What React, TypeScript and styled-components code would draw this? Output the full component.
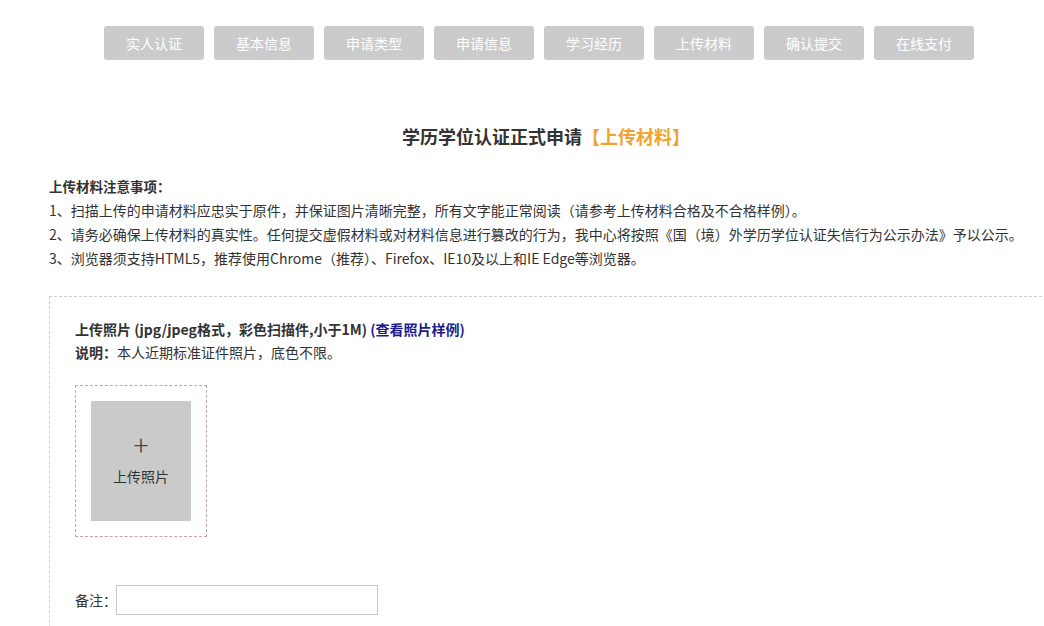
import styled, { createGlobalStyle } from "styled-components";

const GlobalStyle = createGlobalStyle`
  html, body {
    margin: 0;
    padding: 0;
    background: #fff;
    overflow: hidden;
  }
  body {
    font-family: "Noto Sans CJK SC", "Noto Sans", sans-serif;
    color: #333;
  }
`;

const steps = [
  "实人认证",
  "基本信息",
  "申请类型",
  "申请信息",
  "学习经历",
  "上传材料",
  "确认提交",
  "在线支付",
];

// styles
const Page = styled.div`
  width: 1092px;
  padding-top: 26px;
`;

const StepBar = styled.div`
  display: flex;
  gap: 10px;
  padding-left: 104px;
`;

const Step = styled.div`
  width: 100px;
  height: 34px;
  display: flex;
  align-items: center;
  justify-content: center;
  border-radius: 3px;
  background: #cbcbcb;
  color: #fff;
  font-size: 14px;
`;

const Title = styled.h1`
  margin: 63px 0 0;
  text-align: center;
  font-size: 18px;
  line-height: 26px;
  font-weight: bold;
  color: #333;

  span {
    color: #f0a32f;
  }
`;

const Notice = styled.div`
  margin-top: 25px;
  padding-left: 49px;
  font-size: 14px;
  line-height: 24px;
  color: #333;

  div {
    height: 24px;
  }
`;

const NoticeTitle = styled.div`
  font-weight: bold;
  font-size: 13.5px;
`;

const UploadBox = styled.div`
  margin: 26px 0 0 49px;
  height: 400px;
  border: 1px dashed #cfcfcf;
  border-right: none;
  padding: 20px 0 0 25px;
`;

const FieldTitle = styled.div`
  font-size: 14px;
  line-height: 24px;
  font-weight: bold;
  color: #333;

  a {
    color: #1c1c8c;
    text-decoration: none;
  }
`;

const Hint = styled.div`
  font-size: 14px;
  line-height: 22px;
  color: #333;

  b {
    font-weight: bold;
  }
`;

const PhotoFrame = styled.div`
  margin-top: 22px;
  width: 130px;
  height: 150px;
  border: 1px dashed #c9a3a3;
  display: flex;
  align-items: center;
  justify-content: center;
`;

const PhotoSlot = styled.div`
  width: 100px;
  height: 120px;
  box-sizing: border-box;
  padding-bottom: 6px;
  background: #cacaca;
  display: flex;
  flex-direction: column;
  align-items: center;
  justify-content: center;
  color: #333;
  font-size: 14px;
`;

const Plus = styled.div`
  font-size: 28px;
  line-height: 28px;
  font-weight: 300;
  color: #444;
  margin-bottom: 8px;
`;

const RemarkRow = styled.div`
  margin-top: 48px;
  display: flex;
  align-items: center;
  font-size: 14px;
  color: #333;
`;

const RemarkInput = styled.input`
  width: 262px;
  height: 30px;
  box-sizing: border-box;
  border: 1px solid #c8c8c8;
  outline: none;
  padding: 0 6px;
  font-family: inherit;
  margin-left: -1px;
`;

export default function App() {
  return (
    <>
      <GlobalStyle />
      <Page>
        <StepBar>
          {steps.map((s) => (
            <Step key={s}>{s}</Step>
          ))}
        </StepBar>
        <Title>
          学历学位认证正式申请<span>【上传材料】</span>
        </Title>
        <Notice>
          <NoticeTitle>上传材料注意事项：</NoticeTitle>
          <div>1、扫描上传的申请材料应忠实于原件，并保证图片清晰完整，所有文字能正常阅读（请参考上传材料合格及不合格样例）。</div>
          <div>2、请务必确保上传材料的真实性。任何提交虚假材料或对材料信息进行篡改的行为，我中心将按照《国（境）外学历学位认证失信行为公示办法》予以公示。</div>
          <div>3、浏览器须支持HTML5，推荐使用Chrome（推荐）、Firefox、IE10及以上和IE Edge等浏览器。</div>
        </Notice>
        <UploadBox>
          <FieldTitle>
            上传照片 (jpg/jpeg格式，彩色扫描件,小于1M) <a href="#">(查看照片样例)</a>
          </FieldTitle>
          <Hint>
            <b>说明：</b>本人近期标准证件照片，底色不限。
          </Hint>
          <PhotoFrame>
            <PhotoSlot>
              <Plus>+</Plus>
              上传照片
            </PhotoSlot>
          </PhotoFrame>
          <RemarkRow>
            备注：
            <RemarkInput />
          </RemarkRow>
        </UploadBox>
      </Page>
    </>
  );
}
